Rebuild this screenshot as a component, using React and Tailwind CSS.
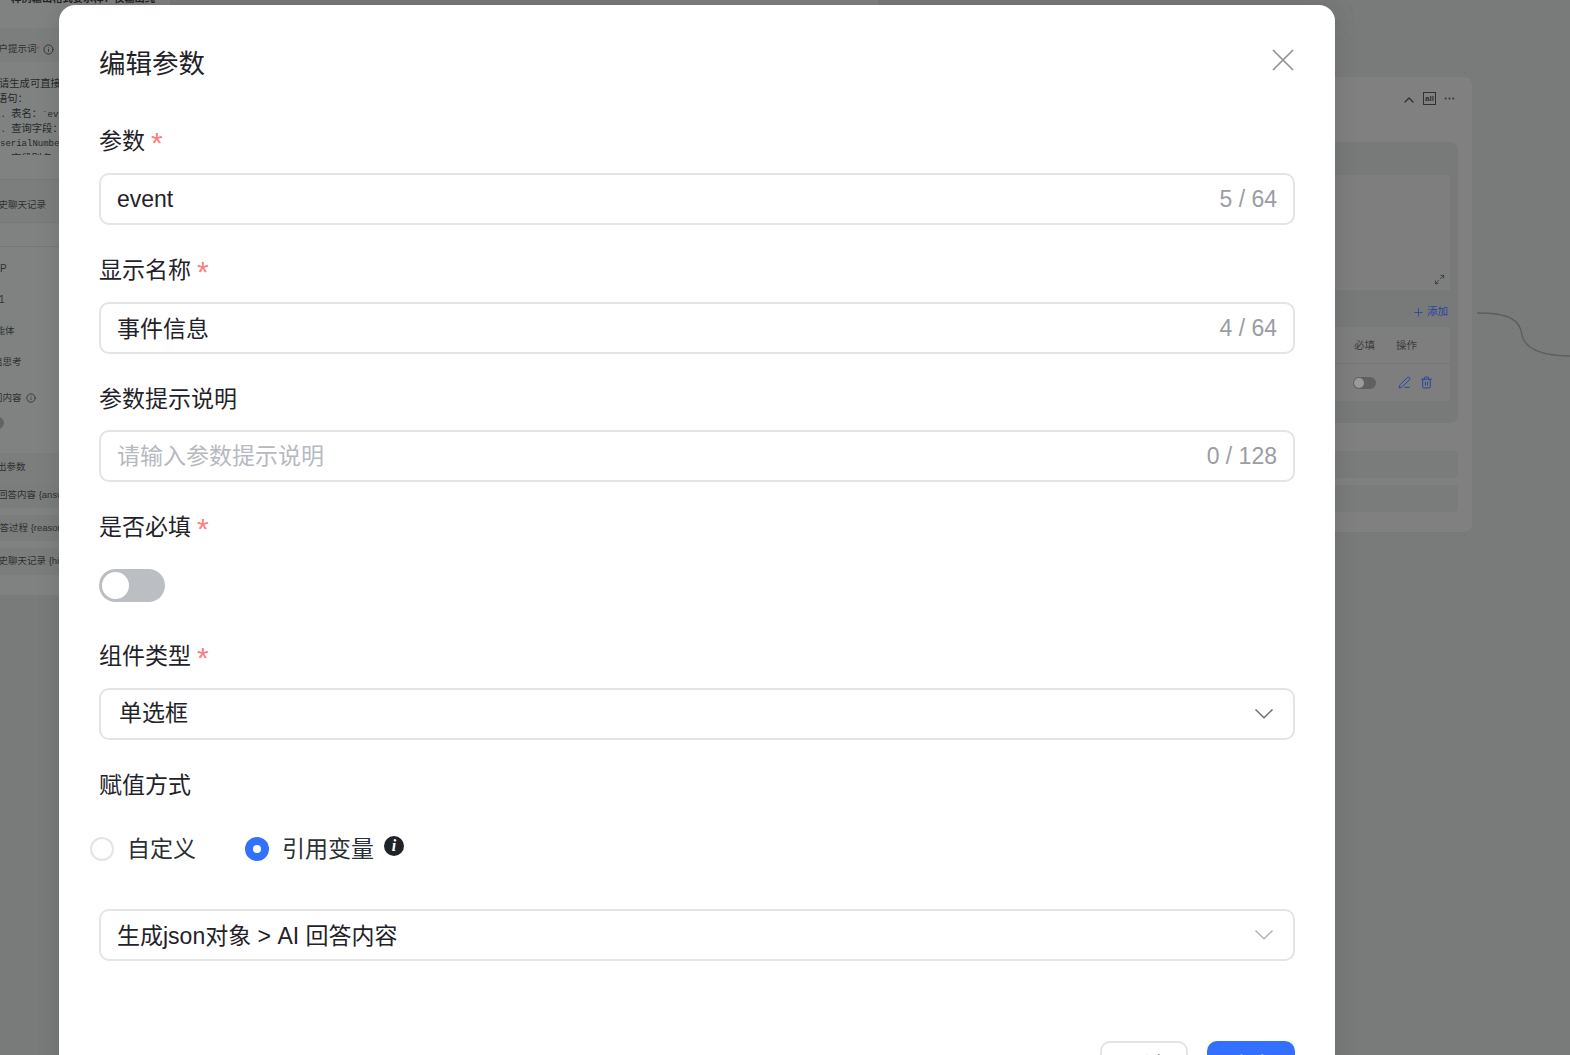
import { useState } from "react";
import { ChevronUp, Ellipsis, PenLine, Plus, Trash2, Maximize2, Info } from "lucide-react";

const FONT = { fontFamily: '"Liberation Sans", "Noto Sans CJK SC", sans-serif' };

const Star = () => (
  <span className="ml-[6px] inline-block h-[32px] text-[30px] leading-[36px] text-[#f98080]">*</span>
);

const Label = ({ text, required, className = "" }) => (
  <div className={`flex h-[32px] items-center text-[23px] text-[#1f2329] ${className}`}>
    {text}
    {required && <Star />}
  </div>
);

const TextField = ({ value, placeholder, count, className = "", valueClass = "" }) => (
  <div
    className={`flex h-[52px] items-center justify-between rounded-[10px] border-2 border-[#e3e4e6] pl-[16px] pr-[16px] text-[23px] ${className}`}
  >
    <span className={`${value ? "text-[#1f2329]" : "text-[#b6b9bf]"} ${valueClass}`}>{value || placeholder}</span>
    <span className="text-[#9a9da3]">{count}</span>
  </div>
);

const SelectField = ({ value, className = "", chevron = "#6b6f76", textClass = "pl-[18px]" }) => (
  <div className={`flex h-[52px] items-center justify-between rounded-[10px] border-2 border-[#e3e4e6] pr-[19px] text-[23px] text-[#1f2329] ${className}`}>
    <span className={textClass}>{value}</span>
    <svg width="20" height="12" viewBox="0 0 20 12" fill="none" stroke={chevron} strokeWidth="1.5">
      <path d="M1.5 1.5 L10 9.8 L18.5 1.5" />
    </svg>
  </div>
);

const Radio = ({ checked, label }) => (
  <div className="flex items-center">
    {checked ? (
      <span className="flex h-[24px] w-[24px] items-center justify-center rounded-full bg-[#3370ff]">
        <span className="h-[8px] w-[8px] rounded-full bg-white" />
      </span>
    ) : (
      <span className="h-[24px] w-[24px] rounded-full border-2 border-[#e3e4e6]" />
    )}
    <span className="ml-[13px] text-[23px] text-[#2b2f36]">{label}</span>
  </div>
);

const InfoFilled = () => (
  <span className="ml-[10px] mb-[6px] flex h-[20px] w-[20px] items-center justify-center rounded-full bg-[#1f2329] font-['Liberation_Serif',serif] text-[16px] font-bold italic leading-none text-white">
    i
  </span>
);

// dimmed left node, most of it is hidden behind the dialog
const LeftPanel = () => {
  const row = "flex items-center whitespace-nowrap text-[9.5px] text-[#2e3030]";
  const cjk = "text-[10.3px]";
  return (
    <div className="absolute left-[-60px] top-[-20px] flex h-[615px] w-[230px] flex-col overflow-hidden rounded-lg bg-[#808282]">
      <div className={`${row} h-[48px] items-end pb-[22px] pl-[71px] text-[10.3px] font-bold text-[#222]`}>
        样例输出格式要求样：仅输出纯
      </div>
      <div className={`${row} h-[34px] bg-[#7c7e7e] pl-[49px] pt-[8px]`}>
        用户提示词<span className="text-[#9a5050]">*</span>
        <Info size={11} className="ml-[3px]" />
      </div>
      <div className="h-[117px] pt-[15px]">
        <div className="h-[78px] overflow-hidden font-['Liberation_Mono','Noto_Sans_CJK_SC',monospace] text-[9px] text-[#262828]">
          <div className="h-[15px] whitespace-nowrap pl-[59px] leading-[15px]"><span className={cjk}>请生成可直接</span></div>
          <div className="h-[15px] whitespace-nowrap pl-[57px] leading-[15px]"><span className={cjk}>语句：</span></div>
          <div className="h-[15px] whitespace-nowrap pl-[55px] leading-[15px]">1. <span className={cjk}>表名：</span>`ev</div>
          <div className="h-[15px] whitespace-nowrap pl-[55px] leading-[15px]">2. <span className={cjk}>查询字段：</span></div>
          <div className="h-[15px] whitespace-nowrap pl-[60px] leading-[15px]">serialNumbe</div>
          <div className="h-[15px] whitespace-nowrap pl-[71px] leading-[15px]"><span className={cjk}>字段别名</span></div>
        </div>
      </div>
      <div className={`${row} h-[44px] border-y border-[#767878] bg-[#7c7e7e] pl-[49px] pt-[8px]`}>历史聊天记录</div>
      <div className="h-[24px] border-b border-[#767878]" />
      <div className={`${row} mt-[13px] h-[16px] pl-[60px] text-[10px]`}>P</div>
      <div className={`${row} mt-[15px] h-[16px] pl-[59px] text-[10px] text-[#2c4a7a]`}>1</div>
      <div className={`${row} mt-[16px] h-[16px] pl-[46px]`}>智能体</div>
      <div className={`${row} mt-[15px] h-[16px] pl-[53px]`}>启思考</div>
      <div className={`${row} mt-[20px] h-[16px] pl-[53px]`}>
        问内容
        <Info size={10} className="ml-[4px]" />
      </div>
      <div className="ml-[47px] mt-[11px] h-[12px] w-[17px] rounded-full bg-[#626464]" />
      <div className={`${row} mt-[24px] h-[29px] bg-[#7c7e7e] pl-[57px]`}>出参数</div>
      <div className={`${row} h-[26px] bg-[#7b7d7d] pl-[58px]`}>回答内容 {"{answer}"}</div>
      <div className={`${row} mt-[7px] h-[26px] bg-[#7b7d7d] pl-[50px]`}>回答过程 {"{reasoning}"}</div>
      <div className={`${row} mt-[7px] h-[27px] bg-[#7b7d7d] pl-[49px]`}>历史聊天记录 {"{history}"}</div>
    </div>
  );
};

// dimmed right node
const RightPanel = () => (
  <div className="absolute left-[1100px] top-[77px] flex h-[455px] w-[372px] flex-col rounded-lg bg-[#808080] pl-[8px] pr-[14px] text-[#3a3c3c]">
    <div className="flex h-[65px] items-start justify-end pr-[2px] pt-[15px]">
      <ChevronUp size={16} strokeWidth={2} className="text-[#2f3131]" />
      <span className="ml-[6px] flex h-[13px] w-[13px] items-center justify-center border border-[#2f3131] text-[8px] font-bold leading-none text-[#2f3131]">
        all
      </span>
      <Ellipsis size={13} className="ml-[7px] text-[#3a3c3c]" />
    </div>
    <div className="h-[281px] rounded-lg bg-[#787a7a] pl-[8px] pr-[8px] pt-[33px]">
      <div className="flex h-[115px] items-end justify-end bg-[#7e7e7e] p-[5px]">
        <Maximize2 size={11} className="text-[#3a3c3c]" />
      </div>
      <div className="flex h-[37px] items-center justify-end pr-[2px] pt-[7px] text-[10.5px] text-[#2444a0]">
        <Plus size={13} strokeWidth={1.5} />
        <span className="ml-[2px]">添加</span>
      </div>
      <div className="h-[74px] bg-[#7e7e7e] text-[10.5px]">
        <div className="flex h-[37px] items-center justify-end border-b border-[#767878] pr-[33px] pt-[2px] text-[#3a3c3c]">
          <span>必填</span>
          <span className="ml-[21px]">操作</span>
        </div>
        <div className="flex h-[37px] items-center justify-end pr-[17px] text-[#2444a0]">
          <span className="relative mr-[22px] h-[12px] w-[23px] rounded-full bg-[#5f6161]">
            <span className="absolute left-[1px] top-[1px] h-[10px] w-[10px] rounded-full bg-[#9a9a9a]" />
          </span>
          <PenLine size={13} strokeWidth={1.8} />
          <Trash2 size={13} strokeWidth={1.8} className="ml-[9px]" />
        </div>
      </div>
    </div>
    <div className="mt-[28px] h-[27px] rounded bg-[#7a7c7c]" />
    <div className="mt-[7px] h-[27px] rounded bg-[#7a7c7c]" />
  </div>
);

const App = () => {
  const [required] = useState(false);

  return (
    <div
      style={FONT}
      className="relative h-[1055px] w-full overflow-hidden bg-[#797b7b] bg-[radial-gradient(#707272_1px,transparent_1px)] bg-[length:16px_16px]"
    >
      <LeftPanel />
      <div className="absolute left-[640px] top-0 h-[5px] w-[238px] bg-[#808080]" />
      <RightPanel />
      <svg className="absolute left-[1476px] top-[310px]" width="94" height="50" fill="none" stroke="#5c5e5e" strokeWidth="1.4">
        <path d="M1 3 C34 3 44 10 46 25 C49 40 69 46 94 46" />
      </svg>

      {/* dialog */}
      <div className="absolute left-[59px] top-[5px] w-[1276px] rounded-t-[16px] bg-white px-[40px] pt-[40px] shadow-[0_0_24px_rgba(0,0,0,0.12)]">
        <div className="flex h-[36px] items-center justify-between">
          <h2 className="pt-[4px] text-[26.5px] font-normal text-[#1f2329]">编辑参数</h2>
          <svg width="24" height="24" viewBox="0 0 24 24" fill="none" stroke="#8f9298" strokeWidth="1.7" className="mb-[6px]">
            <path d="M2 2 L22 22 M22 2 L2 22" />
          </svg>
        </div>

        <Label text="参数" required className="mt-[43px] pt-[2px]" />
        <TextField value="event" count="5 / 64" className="mt-[17px]" />

        <Label text="显示名称" required className="mt-[28px] pt-[2px]" />
        <TextField value="事件信息" count="4 / 64" className="mt-[17px]" valueClass="pt-[3px]" />

        <Label text="参数提示说明" className="mt-[28px] pt-[2px]" />
        <TextField placeholder="请输入参数提示说明" count="0 / 128" className="mt-[16px]" />

        <Label text="是否必填" required className="mt-[28px] pt-[2px]" />
        <div className="relative mt-[27px] h-[33px] w-[66px] rounded-full bg-[#bbbec3]">
          <span
            className={`absolute top-[3px] h-[27px] w-[27px] rounded-full bg-white ${required ? "right-[3px]" : "left-[3px]"}`}
          />
        </div>

        <Label text="组件类型" required className="mt-[37px] pt-[2px]" />
        <SelectField value="单选框" className="mt-[17px]" textClass="pb-[2px] pl-[18px]" />

        <Label text="赋值方式" className="mt-[29px]" />
        <div className="-ml-[9px] mt-[32px] flex h-[32px] items-center">
          <Radio label="自定义" />
          <div className="ml-[49px] flex items-center">
            <Radio checked label="引用变量" />
            <InfoFilled />
          </div>
        </div>

        <SelectField value="生成json对象 > AI 回答内容" chevron="#b0b3b8" textClass="pl-[16px] pt-[3px]" className="mt-[44px]" />

        <div className="mt-[80px] flex justify-end gap-[19px]">
          <button className="h-[50px] w-[88px] rounded-[10px] border-2 border-[#e3e4e6] bg-white text-[23px] text-[#1f2329]">
            取消
          </button>
          <button className="h-[50px] w-[88px] rounded-[10px] bg-[#3370ff] text-[23px] text-white">确定</button>
        </div>
      </div>
    </div>
  );
};

export default App;
